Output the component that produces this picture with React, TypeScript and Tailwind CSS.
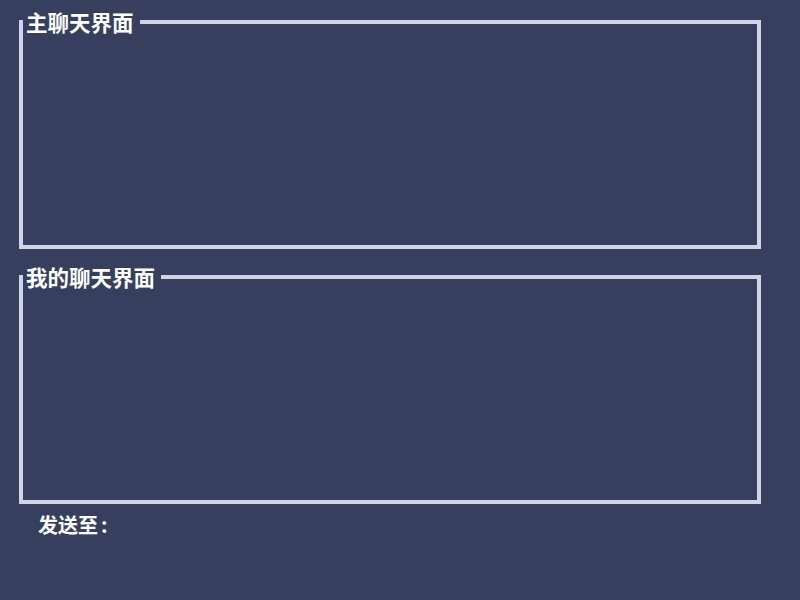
import React from 'react';

const Panel = ({ title }: { title: string }) => (
  <fieldset className="ml-[19px] w-[742px] h-[239px] border-4 border-[#d1d4e5] px-0 pb-0 pt-0 m-0">
    <legend className="pl-[3px] pr-[6px] text-[21.5px] leading-[24px] font-bold text-white">{title}</legend>
  </fieldset>
);

const App = () => {
  return (
    <div
      className="w-[800px] h-[600px] bg-[#373f5e] pt-[10px] flex flex-col"
      style={{ fontFamily: '"Noto Sans CJK SC", "Noto Sans", sans-serif' }}
    >
      <Panel title="主聊天界面" />
      <div className="h-[16px]" />
      <Panel title="我的聊天界面" />
      <div className="pl-[38px] pt-[9px] text-[20px] leading-[24px] font-bold text-white">
        发送至<span className="pl-[3px]">:</span>
      </div>
    </div>
  );
};

export default App;
